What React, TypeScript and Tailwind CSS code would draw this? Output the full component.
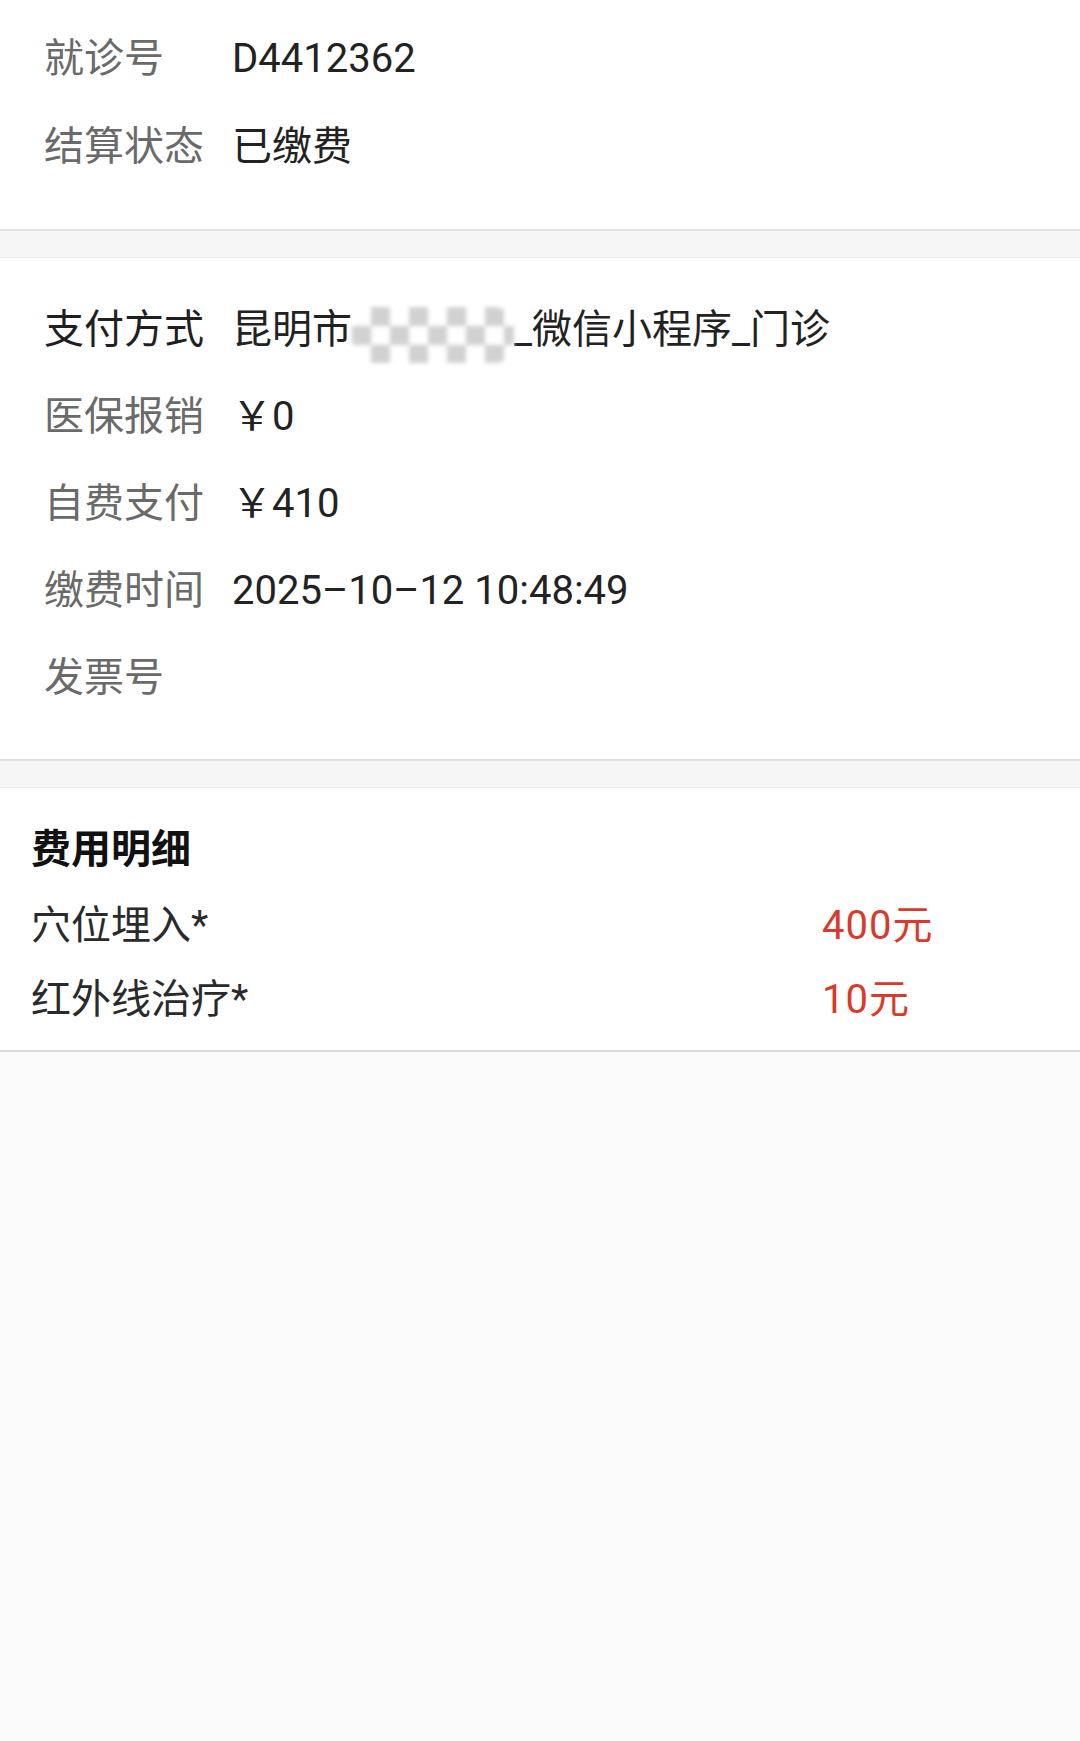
const font = "font-['Roboto','Noto_Sans_CJK_SC',sans-serif]";

type Row = { label: string; value?: React.ReactNode; dark?: boolean };

const InfoRow = ({ label, value, dark, h }: Row & { h: string }) => (
  <div className={`flex items-center ${h}`}>
    <div className={`w-[188px] shrink-0 whitespace-nowrap ${dark ? 'text-[#1f1f1f]' : 'text-[#6a6a6a]'}`}>{label}</div>
    <div className="text-[#222] whitespace-nowrap">{value}</div>
  </div>
);

const Band = () => (
  <div className="h-[29px] bg-[#f6f6f6] border-t-2 border-b border-t-[#e2e2e2] border-b-[#ececec]" />
);

export default function App() {
  return (
    <div className={`${font} w-[1080px] min-h-[1741px] bg-[#fbfbfb] text-[40px] leading-none`}>
      <section className="bg-white px-[44px] pt-[15px] pb-[38px]">
        <InfoRow h="h-[88px]" label="就诊号" value="D4412362" />
        <InfoRow h="h-[88px]" label="结算状态" value="已缴费" />
      </section>
      <Band />
      <section className="bg-white px-[44px] pt-[28px] pb-[38px]">
        <InfoRow
          h="h-[87px]"
          dark
          label="支付方式"
          value={
            <span className="inline-flex items-center">
              昆明市
              <span className="relative top-[5px] inline-block w-[162px] h-[56px] rounded-[20px] blur-[2px] bg-[image:repeating-conic-gradient(#cdcdcd_0%_25%,#ffffff_0%_50%)] bg-[length:38px_38px] opacity-90" />
              _微信小程序_门诊
            </span>
          }
        />
        <InfoRow h="h-[87px]" label="医保报销" value="￥0" />
        <InfoRow h="h-[87px]" label="自费支付" value="￥410" />
        <InfoRow h="h-[87px]" label="缴费时间" value="2025–10–12 10:48:49" />
        <InfoRow h="h-[87px]" label="发票号" />
      </section>
      <Band />
      <section className="bg-white px-[31px] pt-[22px] pb-[13px] border-b-2 border-b-[#d9d9d9]">
        <div className="h-[79px] flex items-center font-bold text-[#111]">费用明细</div>
        {[
          ['穴位埋入*', '400元'],
          ['红外线治疗*', '10元'],
        ].map(([name, amt]) => (
          <div key={name} className="h-[74px] flex items-center">
            <div className="w-[791px] shrink-0 text-[#2a2a2a]">{name}</div>
            <div className="text-[#d93a2b] tracking-[1px]">{amt}</div>
          </div>
        ))}
      </section>
    </div>
  );
}
